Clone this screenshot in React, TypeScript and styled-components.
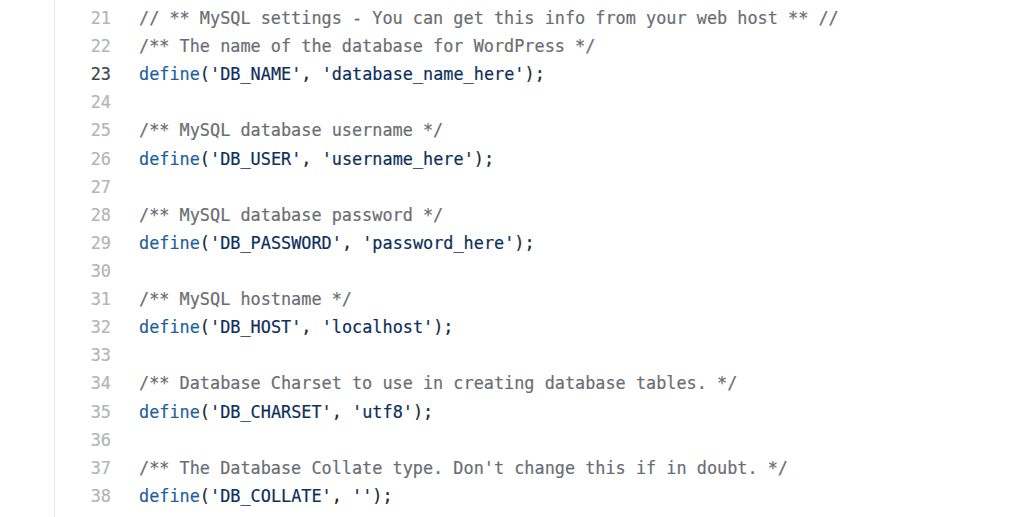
import React from "react";
import styled, { createGlobalStyle } from "styled-components";

const Global = createGlobalStyle`
  html, body { margin: 0; padding: 0; background: #ffffff; }
  body { font-family: "DejaVu Sans Mono", "Liberation Mono", monospace; }
`;

const Page = styled.div`
  width: 1024px;
  height: 517px;
  overflow: hidden;
  padding-left: 54px;
  box-sizing: border-box;
  background: #ffffff;
`;

const Panel = styled.div`
  border-left: 1px solid #e4e6e9;
  height: 100%;
  padding-top: 4px;
  box-sizing: border-box;
`;

const Row = styled.div`
  display: grid;
  grid-template-columns: 56px 1fr;
  column-gap: 28px;
  height: 28.12px;
  align-items: center;
  font-size: 16.85px;
  line-height: 28.12px;
  white-space: pre;
  -webkit-text-stroke: 0.2px currentColor;
`;

const Num = styled.span<{ $active?: boolean }>`
  text-align: right;
  color: ${(p) => (p.$active ? "#3f4448" : "#b3b5b8")};
`;

const Code = styled.span`
  color: #24292e;
`;

const Comment = styled.span`
  color: #6a6e73;
`;

const Fn = styled.span`
  color: #1f5f9e;
`;

const Str = styled.span`
  color: #0d2f5a;
`;

type Line =
  | { kind: "comment"; text: string }
  | { kind: "blank" }
  | { kind: "define"; key: string; value: string };

const lines: Line[] = [
  { kind: "comment", text: "// ** MySQL settings - You can get this info from your web host ** //" },
  { kind: "comment", text: "/** The name of the database for WordPress */" },
  { kind: "define", key: "DB_NAME", value: "database_name_here" },
  { kind: "blank" },
  { kind: "comment", text: "/** MySQL database username */" },
  { kind: "define", key: "DB_USER", value: "username_here" },
  { kind: "blank" },
  { kind: "comment", text: "/** MySQL database password */" },
  { kind: "define", key: "DB_PASSWORD", value: "password_here" },
  { kind: "blank" },
  { kind: "comment", text: "/** MySQL hostname */" },
  { kind: "define", key: "DB_HOST", value: "localhost" },
  { kind: "blank" },
  { kind: "comment", text: "/** Database Charset to use in creating database tables. */" },
  { kind: "define", key: "DB_CHARSET", value: "utf8" },
  { kind: "blank" },
  { kind: "comment", text: "/** The Database Collate type. Don't change this if in doubt. */" },
  { kind: "define", key: "DB_COLLATE", value: "" },
];

function renderLine(l: Line) {
  if (l.kind === "blank") return <Code>{" "}</Code>;
  if (l.kind === "comment") return <Comment>{l.text}</Comment>;
  return (
    <Code>
      <Fn>define</Fn>(<Str>'{l.key}'</Str>, <Str>'{l.value}'</Str>);
    </Code>
  );
}

export default function App() {
  return (
    <Page>
      <Global />
      <Panel>
        {lines.map((l, i) => (
          <Row key={i}>
            <Num $active={i + 21 === 23}>{i + 21}</Num>
            {renderLine(l)}
          </Row>
        ))}
      </Panel>
    </Page>
  );
}
